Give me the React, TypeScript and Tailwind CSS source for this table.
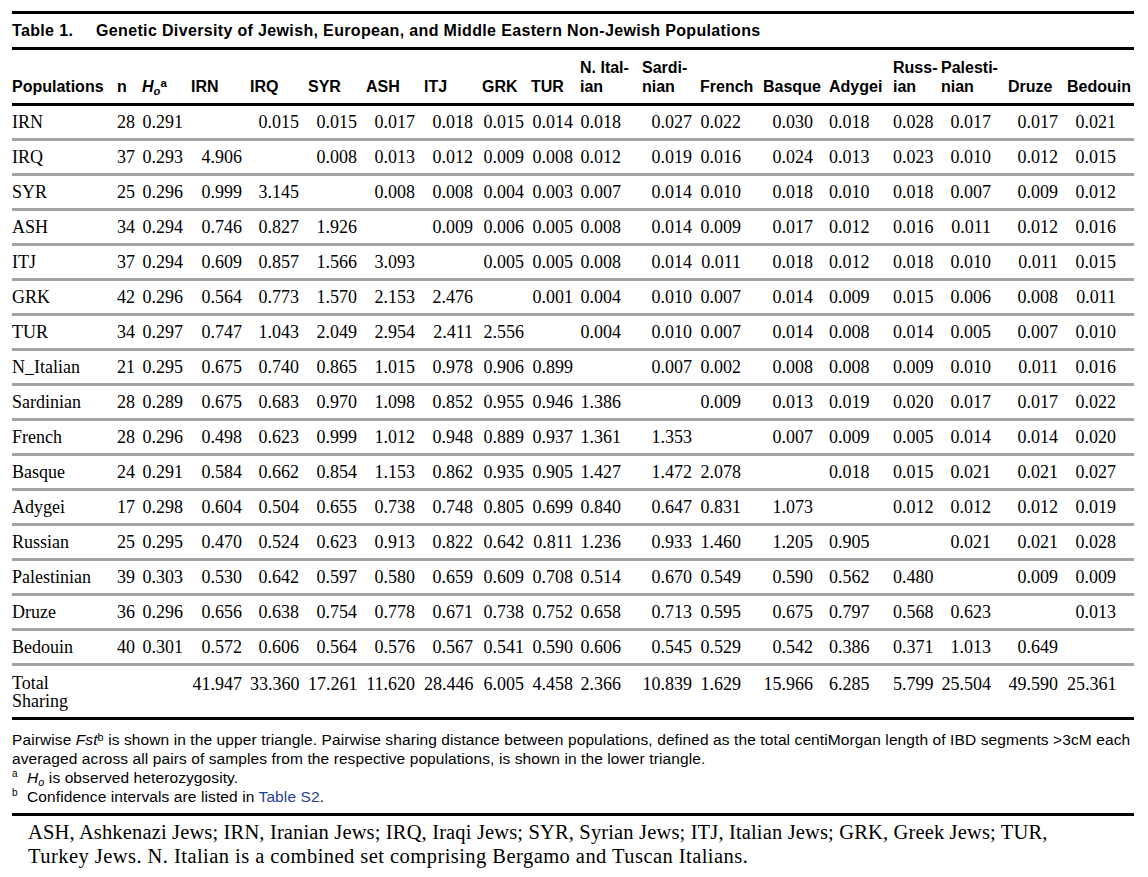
const GRID =
  'grid grid-cols-[105px_25px_49px_59px_58px_58px_58px_58px_49px_49px_62px_58px_63px_66px_64px_48px_67px_59px_67px]';

// right padding for each value column, so numbers line up as in the print
const PR = [
  '',
  'pr-[8px]',
  'pr-[8px]',
  'pr-[8px]',
  'pr-[9px]',
  'pr-[9px]',
  'pr-[9px]',
  'pr-[9px]',
  'pr-[7px]',
  'pr-[7px]',
  'pr-[21px]',
  'pr-[8px]',
  'pr-[22px]',
  'pr-[16px]',
  'pr-[24px]',
  'pr-[8px]',
  'pr-[17px]',
  'pr-[9px]',
  'pr-[18px]',
];

const HEADS: (string | string[])[] = [
  'IRN', 'IRQ', 'SYR', 'ASH', 'ITJ', 'GRK', 'TUR',
  ['N. Ital-', 'ian'], ['Sardi-', 'nian'], 'French', 'Basque', 'Adygei',
  ['Russ-', 'ian'], ['Palesti-', 'nian'], 'Druze', 'Bedouin',
];

const ROWS: [string, string, string, string[]][] = [
  ['IRN', '28', '0.291', ['', '0.015', '0.015', '0.017', '0.018', '0.015', '0.014', '0.018', '0.027', '0.022', '0.030', '0.018', '0.028', '0.017', '0.017', '0.021']],
  ['IRQ', '37', '0.293', ['4.906', '', '0.008', '0.013', '0.012', '0.009', '0.008', '0.012', '0.019', '0.016', '0.024', '0.013', '0.023', '0.010', '0.012', '0.015']],
  ['SYR', '25', '0.296', ['0.999', '3.145', '', '0.008', '0.008', '0.004', '0.003', '0.007', '0.014', '0.010', '0.018', '0.010', '0.018', '0.007', '0.009', '0.012']],
  ['ASH', '34', '0.294', ['0.746', '0.827', '1.926', '', '0.009', '0.006', '0.005', '0.008', '0.014', '0.009', '0.017', '0.012', '0.016', '0.011', '0.012', '0.016']],
  ['ITJ', '37', '0.294', ['0.609', '0.857', '1.566', '3.093', '', '0.005', '0.005', '0.008', '0.014', '0.011', '0.018', '0.012', '0.018', '0.010', '0.011', '0.015']],
  ['GRK', '42', '0.296', ['0.564', '0.773', '1.570', '2.153', '2.476', '', '0.001', '0.004', '0.010', '0.007', '0.014', '0.009', '0.015', '0.006', '0.008', '0.011']],
  ['TUR', '34', '0.297', ['0.747', '1.043', '2.049', '2.954', '2.411', '2.556', '', '0.004', '0.010', '0.007', '0.014', '0.008', '0.014', '0.005', '0.007', '0.010']],
  ['N_Italian', '21', '0.295', ['0.675', '0.740', '0.865', '1.015', '0.978', '0.906', '0.899', '', '0.007', '0.002', '0.008', '0.008', '0.009', '0.010', '0.011', '0.016']],
  ['Sardinian', '28', '0.289', ['0.675', '0.683', '0.970', '1.098', '0.852', '0.955', '0.946', '1.386', '', '0.009', '0.013', '0.019', '0.020', '0.017', '0.017', '0.022']],
  ['French', '28', '0.296', ['0.498', '0.623', '0.999', '1.012', '0.948', '0.889', '0.937', '1.361', '1.353', '', '0.007', '0.009', '0.005', '0.014', '0.014', '0.020']],
  ['Basque', '24', '0.291', ['0.584', '0.662', '0.854', '1.153', '0.862', '0.935', '0.905', '1.427', '1.472', '2.078', '', '0.018', '0.015', '0.021', '0.021', '0.027']],
  ['Adygei', '17', '0.298', ['0.604', '0.504', '0.655', '0.738', '0.748', '0.805', '0.699', '0.840', '0.647', '0.831', '1.073', '', '0.012', '0.012', '0.012', '0.019']],
  ['Russian', '25', '0.295', ['0.470', '0.524', '0.623', '0.913', '0.822', '0.642', '0.811', '1.236', '0.933', '1.460', '1.205', '0.905', '', '0.021', '0.021', '0.028']],
  ['Palestinian', '39', '0.303', ['0.530', '0.642', '0.597', '0.580', '0.659', '0.609', '0.708', '0.514', '0.670', '0.549', '0.590', '0.562', '0.480', '', '0.009', '0.009']],
  ['Druze', '36', '0.296', ['0.656', '0.638', '0.754', '0.778', '0.671', '0.738', '0.752', '0.658', '0.713', '0.595', '0.675', '0.797', '0.568', '0.623', '', '0.013']],
  ['Bedouin', '40', '0.301', ['0.572', '0.606', '0.564', '0.576', '0.567', '0.541', '0.590', '0.606', '0.545', '0.529', '0.542', '0.386', '0.371', '1.013', '0.649', '']],
];

const TOTALS = ['41.947', '33.360', '17.261', '11.620', '28.446', '6.005', '4.458', '2.366', '10.839', '1.629', '15.966', '6.285', '5.799', '25.504', '49.590', '25.361'];

const SANS = "font-['Liberation_Sans',Arial,sans-serif]";

function Ho({ bold }: { bold?: boolean }) {
  return (
    <span className={bold ? 'font-bold' : ''}>
      <i>H</i>
      <i className="relative top-[0.25em] text-[0.7em] leading-[0]">o</i>
    </span>
  );
}

function Mark({ c }: { c: string }) {
  return <span className="w-[15px] shrink-0 text-[10px] leading-[12px]">{c}</span>;
}

export default function App() {
  return (
    <div className="min-h-screen bg-white text-black font-['Liberation_Serif','Times_New_Roman',serif]">
      <div className="w-[1146px] px-3 pt-[11px]">
        {/* title */}
        <div className={`border-y-[3px] border-black h-[39px] flex items-center ${SANS} font-bold text-[16px] tracking-[0.35px]`}>
          <span className="inline-block w-[84px]">Table 1.</span>
          <span>Genetic Diversity of Jewish, European, and Middle Eastern Non-Jewish Populations</span>
        </div>

        {/* column heads */}
        <div className={`${GRID} h-[56px] border-b-[3px] border-black items-end pb-[7px] ${SANS} font-bold text-[16px] leading-[19px]`}>
          <div>Populations</div>
          <div>n</div>
          <div className="whitespace-nowrap">
            <Ho bold />
            <span className="relative top-[-0.45em] text-[0.72em] leading-[0]">a</span>
          </div>
          {HEADS.map((h, i) => (
            <div key={i} className="whitespace-nowrap">
              {Array.isArray(h) ? h.map((l) => <div key={l}>{l}</div>) : h}
            </div>
          ))}
        </div>

        {/* body */}
        {ROWS.map(([name, n, ho, vals]) => (
          <div key={name} className={`${GRID} h-[35px] items-center border-b-[3px] border-[#a3a3a3] text-[18px] leading-none`}>
            <div>{name}</div>
            <div className={`text-right ${PR[1]}`}>{n}</div>
            <div className={`text-right ${PR[2]}`}>{ho}</div>
            {vals.map((v, i) => (
              <div key={i} className={`text-right ${PR[i + 3]}`}>{v}</div>
            ))}
          </div>
        ))}

        <div className={`${GRID} h-[54px] items-center border-b-[3px] border-black text-[18px] leading-[18px]`}>
          <div>
            Total
            <br />
            Sharing
          </div>
          <div />
          <div />
          {TOTALS.map((v, i) => (
            <div key={i} className={`self-start pt-[9px] text-right ${PR[i + 3]}`}>{v}</div>
          ))}
        </div>

        {/* footnotes */}
        <div className={`${SANS} text-[15.5px] leading-[19px] pt-[10px] pb-[7px] border-b-[3px] border-black tracking-[0.1px]`}>
          <div className="whitespace-nowrap">
            Pairwise <i>Fst</i>
            <span className="relative top-[-0.4em] text-[0.7em] leading-[0]">b</span> is shown in the upper triangle. Pairwise sharing distance between populations, defined as the total centiMorgan length of IBD segments &gt;3cM each
          </div>
          <div className="whitespace-nowrap">averaged across all pairs of samples from the respective populations, is shown in the lower triangle.</div>
          <div className="flex items-start">
            <Mark c="a" />
            <span>
              <Ho /> is observed heterozygosity.
            </span>
          </div>
          <div className="flex items-start">
            <Mark c="b" />
            <span>
              Confidence intervals are listed in <span className="text-[#26409b]">Table S2</span>.
            </span>
          </div>
        </div>

        <div className="pl-4 pt-[4px] text-[20.5px] leading-[24px] whitespace-nowrap">
          <div className="tracking-[0.15px]">
            ASH, Ashkenazi Jews; IRN, Iranian Jews; IRQ, Iraqi Jews; SYR, Syrian Jews; ITJ, Italian Jews; GRK, Greek Jews; TUR,
          </div>
          <div className="tracking-[0.45px]">Turkey Jews. N. Italian is a combined set comprising Bergamo and Tuscan Italians.</div>
        </div>
      </div>
    </div>
  );
}
